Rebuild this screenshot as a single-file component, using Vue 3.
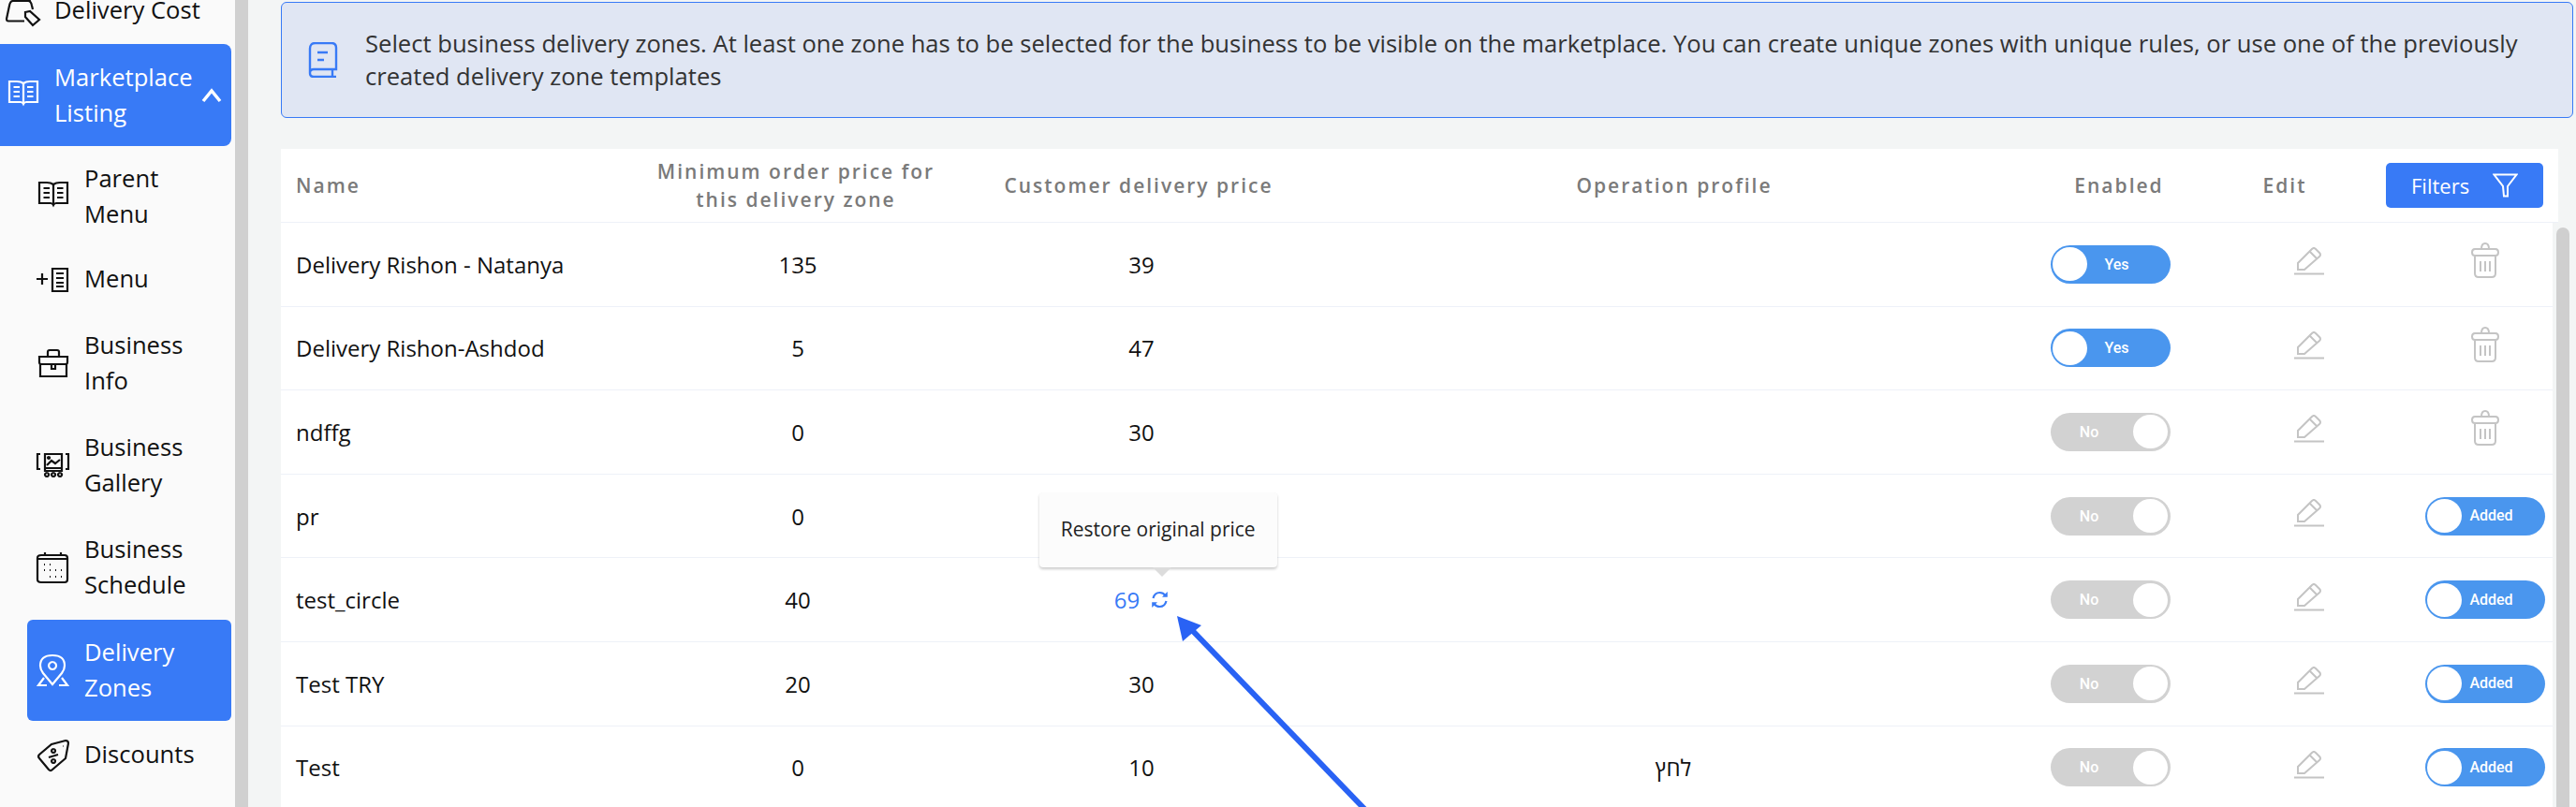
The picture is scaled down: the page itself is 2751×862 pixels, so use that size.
<template>
  <div class="page">
    <aside class="sidebar">
      <div
        v-for="item in menu"
        :key="item.label"
        class="nav-item"
        :class="{ child: item.child, active: item.active, open: item.open }"
      >
        <svg class="nav-icon" viewBox="0 0 34 34">
          <path v-for="d in icons[item.icon]" :key="d" :d="d" />
        </svg>
        <span class="nav-label">{{ item.label }}</span>
        <svg v-if="item.open" class="chevron" viewBox="0 0 22 16">
          <path d="M2 14L11 3L20 14" />
        </svg>
      </div>
    </aside>
    <div class="side-scroll"></div>

    <main class="main">
      <div class="banner">
        <svg class="banner-icon" viewBox="0 0 32 38">
          <path d="M2 33V7Q2 1 8 1H25Q30 1 30 6V29H6Q2 29 2 33Q2 37 6 37H30M26 29V37M10 11H21M10 19H17" />
        </svg>
        <p>Select business delivery zones. At least one zone has to be selected for the business to be visible on the marketplace. You can create unique zones with unique rules, or use one of the previously created delivery zone templates</p>
      </div>

      <section class="table">
        <div class="head">
          <div class="th name-th">Name</div>
          <div class="th wrap-th">Minimum order price for this delivery zone</div>
          <div class="th">Customer delivery price</div>
          <div class="th">Operation profile</div>
          <div class="th">Enabled</div>
          <div class="th">Edit</div>
          <button class="filters" type="button">
            Filters
            <svg viewBox="0 0 27 26"><path d="M1.5 1.5H25.5L16 14V24.5H12L11 14Z" /></svg>
          </button>
        </div>

        <div class="body">
          <div class="rows">
            <div v-for="row in rows" :key="row.name" class="row">
              <div class="name">{{ row.name }}</div>
              <div class="cell">{{ row.min }}</div>
              <div class="cell">
                <span v-if="row.restore" class="restore">
                  69
                  <svg viewBox="0 0 19 19">
                    <path class="arc" d="M2.5 8C3.5 4 6.5 2 9.5 2C12 2 14 3 15.5 5M16.5 11C15.5 15 12.5 17 9.5 17C7 17 5 16 3.5 14" />
                    <path class="head-tip" d="M17.8 1V6.8H12ZM1.2 18V12.2H7Z" />
                  </svg>
                  <span class="tooltip">Restore original price</span>
                </span>
                <template v-else>{{ row.price }}</template>
              </div>
              <div class="cell">{{ row.profile }}</div>
              <div class="toggle" :class="row.enabled ? 'on' : 'off'">
                <span class="knob"></span>
                <span class="toggle-text">{{ row.enabled ? 'Yes' : 'No' }}</span>
              </div>
              <div class="edit">
                <svg viewBox="0 0 32 30">
                  <path d="M4 24V17L19 2Q21 0 23 2L27 6Q29 8 27 10L11 24ZM17 5L24 12M0 28.5H32" />
                </svg>
              </div>
              <div class="last">
                <div v-if="row.added" class="toggle on">
                  <span class="knob"></span>
                  <span class="toggle-text">Added</span>
                </div>
                <svg v-else class="trash" viewBox="0 0 30 38">
                  <path d="M11 7Q11 1 15 1Q19 1 19 7M4 7H26Q29 7 29 10.5Q29 14 26 14H4Q1 14 1 10.5Q1 7 4 7ZM4 14V33Q4 37 8 37H22Q26 37 26 33V14M10 20V31M15 20V31M20 20V31" />
                </svg>
              </div>
            </div>
          </div>
          <div class="table-scroll"></div>
        </div>
      </section>
    </main>

    <svg class="arrow" viewBox="0 0 2751 862">
      <path d="M1459 866L1272 672" />
      <polygon points="1257,658 1283,668 1263,685" />
    </svg>
  </div>
</template>

<script setup>
const icons = {
  cost: [
    'M18 28.5H1Q-1 28.5 -1 26L2 12Q3 7 6 7H22Q25 7 26 12L27 16',
    'M8 7L10 1H22L24 7M12 5H20',
    'M19 19L24 18L34 27L27 33L19 24Z'
  ],
  book: [
    'M17 4C15 2.5 13 2 10 2H2V24H14C15.5 24 16.5 25 17 26C17.5 25 18.5 24 20 24H32V2H24C21 2 19 2.5 17 4Z',
    'M17 4V26',
    'M6.5 8H13M6.5 13H13M6.5 18H13M21 8H27.5M21 13H27.5M21 18H27.5'
  ],
  menu: [
    'M-1 17H11M5 11V23',
    'M16 6H32V30H16Z',
    'M20 11H28M20 16H28M20 21H28M20 25H28'
  ],
  info: [
    'M2 10H32V16Q32 18 30 18H4Q2 18 2 16ZM3 18V31H31V18',
    'M11 10V5Q11 3 13 3H21Q23 3 23 5V10',
    'M15 18V23H19V18'
  ],
  gallery: [
    'M3 5H0V21H3M30 5H33V21H30',
    'M8 5H26V23H8Z',
    'M8 20H26M10 17L15 12L19 15L24 11',
    'M12 8A1 1 0 1 0 12.1 8',
    'M10 25A2 2 0 1 0 10.1 25M17 25A2 2 0 1 0 17.1 25M24 25A2 2 0 1 0 24.1 25'
  ],
  calendar: [
    'M4 4H29Q32 4 32 7V30Q32 33 29 33H4Q0 33 0 30V7Q0 4 4 4Z',
    'M0 8H32M8 1V4M25 1V4',
    'M7 14h1M13 14h1M7 20h1M13 20h1M19 20h1M25 20h1M13 27h1M19 27h1M25 27h1'
  ],
  zones: [
    'M16 32L6 20Q3 16 3 12Q3 1 16 1Q29 1 29 12Q29 16 26 20Z',
    'M16 8A4 4 0 1 0 16.1 8',
    'M7 25L1 33H10M26 25L32 33H23'
  ],
  discount: [
    'M15 6L30 2Q33 2 33 5L30 21L16 33Q14 35 12 33L2 21Q0 19 2 17Z',
    'M27 8h.5',
    'M12 20L22 17',
    'M17 11A2 2 0 1 0 17.1 11M17 22A2 2 0 1 0 17.1 22'
  ]
}

const menu = [
  { label: 'Delivery Cost', icon: 'cost' },
  { label: 'Marketplace Listing', icon: 'book', active: true, open: true },
  { label: 'Parent Menu', icon: 'book', child: true },
  { label: 'Menu', icon: 'menu', child: true },
  { label: 'Business Info', icon: 'info', child: true },
  { label: 'Business Gallery', icon: 'gallery', child: true },
  { label: 'Business Schedule', icon: 'calendar', child: true },
  { label: 'Delivery Zones', icon: 'zones', child: true, active: true },
  { label: 'Discounts', icon: 'discount', child: true }
]

const rows = [
  { name: 'Delivery Rishon - Natanya', min: 135, price: 39, enabled: true },
  { name: 'Delivery Rishon-Ashdod', min: 5, price: 47, enabled: true },
  { name: 'ndffg', min: 0, price: 30 },
  { name: 'pr', min: 0, price: '', added: true },
  { name: 'test_circle', min: 40, restore: true, added: true },
  { name: 'Test TRY', min: 20, price: 30, added: true },
  { name: 'Test', min: 0, price: 10, profile: 'לחץ', added: true }
]
</script>

<style>
html, body {
  margin: 0;
  overflow: hidden;
}
</style>

<style scoped>
.page {
  position: relative;
  display: flex;
  width: 2751px;
  height: 862px;
  overflow: hidden;
  background: #f3f5f5;
  font-family: "Open Sans", "Noto Sans", sans-serif;
  font-size: 24px;
  color: #111;
}

.sidebar {
  flex: 0 0 251px;
  display: flex;
  flex-direction: column;
  gap: 1px;
  margin-top: -24px;
  background: #fafafa;
  font-size: 25.6px;
}

.side-scroll {
  flex: 0 0 14px;
  margin-right: 4px;
  background: #d0d0d0;
}

.nav-item {
  display: flex;
  align-items: center;
  gap: 16px;
  box-sizing: border-box;
  width: 247px;
  padding: 16px 10px 16px 8px;
  line-height: 38px;
  border-radius: 0 8px 8px 0;
}

.nav-item.child {
  width: 218px;
  margin-left: 29px;
  padding-left: 11px;
  border-radius: 6px;
}

.nav-item:nth-child(3) {
  margin-top: -1px;
}

.nav-item:nth-child(4) {
  margin-top: -2px;
}

.nav-item:nth-child(8) {
  margin-top: 1px;
}

.nav-item.active {
  background: #387af6;
  color: #fff;
}

.nav-item.open {
  padding-top: 16.5px;
  padding-bottom: 16.5px;
}

.nav-icon {
  flex: none;
  width: 34px;
  height: 34px;
  fill: none;
  stroke: currentColor;
  stroke-width: 2.2;
  overflow: visible;
}

.nav-label {
  flex: 1;
  min-width: 0;
}

.child .nav-label {
  max-width: 122px;
}

.chevron {
  flex: none;
  width: 22px;
  height: 16px;
  fill: none;
  stroke: #fff;
  stroke-width: 3.5;
}

.main {
  flex: 1;
  min-width: 0;
  padding: 2px 3px 0 31px;
}

.banner {
  display: flex;
  align-items: center;
  gap: 29px;
  box-sizing: border-box;
  height: 124px;
  padding: 0 50px 0 28px;
  background: #e0e6f3;
  border: 1px solid #387af6;
  border-radius: 6px;
  font-size: 25.6px;
  color: #333;
}

.banner p {
  margin: 0;
  line-height: 35px;
}

.banner-icon {
  flex: none;
  width: 32px;
  height: 38px;
  fill: none;
  stroke: #387af6;
  stroke-width: 2.4;
}

.table {
  width: 2432px;
  margin-top: 33px;
}

.head {
  display: grid;
  grid-template-columns: 350px 400px 332px 812px 138px 216px 168px;
  align-items: center;
  box-sizing: border-box;
  height: 79px;
  background: #fff;
  border-bottom: 1px solid #eef1f8;
}

.th {
  text-align: center;
  font-size: 21px;
  font-weight: 600;
  letter-spacing: 2px;
  line-height: 30px;
  color: #7a7a7a;
}

.head .name-th {
  padding: 0 16px;
  text-align: left;
}

.head .wrap-th {
  padding: 0 50px;
}

.filters {
  display: flex;
  align-items: center;
  gap: 25px;
  box-sizing: border-box;
  width: 168px;
  height: 48px;
  padding: 0 0 0 27px;
  background: #387af6;
  border: 0;
  border-radius: 5px;
  font: inherit;
  font-size: 22px;
  color: #fff;
}

.filters svg {
  width: 27px;
  height: 26px;
  fill: none;
  stroke: #fff;
  stroke-width: 2;
}

.body {
  display: flex;
}

.rows {
  width: 2426px;
  background: #fff;
}

.table-scroll {
  flex: 0 0 14px;
  height: 620px;
  margin: 5px 0 0 4px;
  background: #cfcfcf;
  border-radius: 7px 7px 0 0;
}

.row {
  display: grid;
  grid-template-columns: 350px 404px 330px 806px 128px 272px 136px;
  align-items: center;
  box-sizing: border-box;
  height: 89.6px;
  border-bottom: 1px solid #eef1f8;
}

.name {
  padding-left: 16px;
}

.cell {
  text-align: center;
}

.restore {
  position: relative;
  display: inline-flex;
  align-items: center;
  gap: 12px;
  color: #387af6;
}

.restore svg {
  width: 19px;
  height: 19px;
  overflow: visible;
}

.arc {
  fill: none;
  stroke: #387af6;
  stroke-width: 2.2;
}

.head-tip {
  fill: #387af6;
}

.tooltip {
  position: absolute;
  left: -80px;
  bottom: calc(100% + 18px);
  width: 254px;
  height: 80px;
  z-index: 2;
  background: #fcfcfc;
  border-radius: 4px;
  box-shadow: 0 2px 3px rgba(0, 0, 0, 0.2);
  font-size: 21px;
  line-height: 78px;
  text-align: center;
  color: #222;
  white-space: nowrap;
}

.tooltip::after {
  content: "";
  position: absolute;
  left: 121px;
  top: 100%;
  border: 10px solid transparent;
  border-top-color: #dcdcdc;
  border-bottom: 0;
}

.toggle {
  display: flex;
  align-items: center;
  box-sizing: border-box;
  width: 128px;
  height: 41px;
  border-radius: 21px;
  font-family: Roboto, "Liberation Sans", sans-serif;
  font-size: 16px;
  font-weight: 500;
  color: #fff;
}

.toggle.on {
  background: #4a96ee;
}

.toggle.off {
  flex-direction: row-reverse;
  background: #d2d2d2;
}

.knob {
  flex: none;
  width: 37px;
  height: 36px;
  background: #fff;
  border-radius: 50%;
}

.on .knob {
  margin-left: 2px;
}

.off .knob {
  margin-right: 3px;
}

.toggle-text {
  flex: 1;
  text-align: center;
}

.on .toggle-text {
  padding-right: 26px;
}

.off .toggle-text {
  padding-right: 6px;
}

.edit {
  padding-left: 132px;
  line-height: 0;
}

.edit svg {
  width: 32px;
  height: 30px;
  margin-bottom: 6px;
  fill: none;
  stroke: #c4c4c4;
  stroke-width: 2;
}

.last {
  display: flex;
  line-height: 0;
}

.trash {
  width: 30px;
  height: 38px;
  margin: 0 0 8px 49px;
  fill: none;
  stroke: #c4c4c4;
  stroke-width: 2;
}

.arrow {
  position: absolute;
  inset: 0;
  width: 2751px;
  height: 862px;
  z-index: 3;
  pointer-events: none;
}

.arrow path {
  stroke: #2962f4;
  stroke-width: 6;
}

.arrow polygon {
  fill: #2962f4;
}
</style>
